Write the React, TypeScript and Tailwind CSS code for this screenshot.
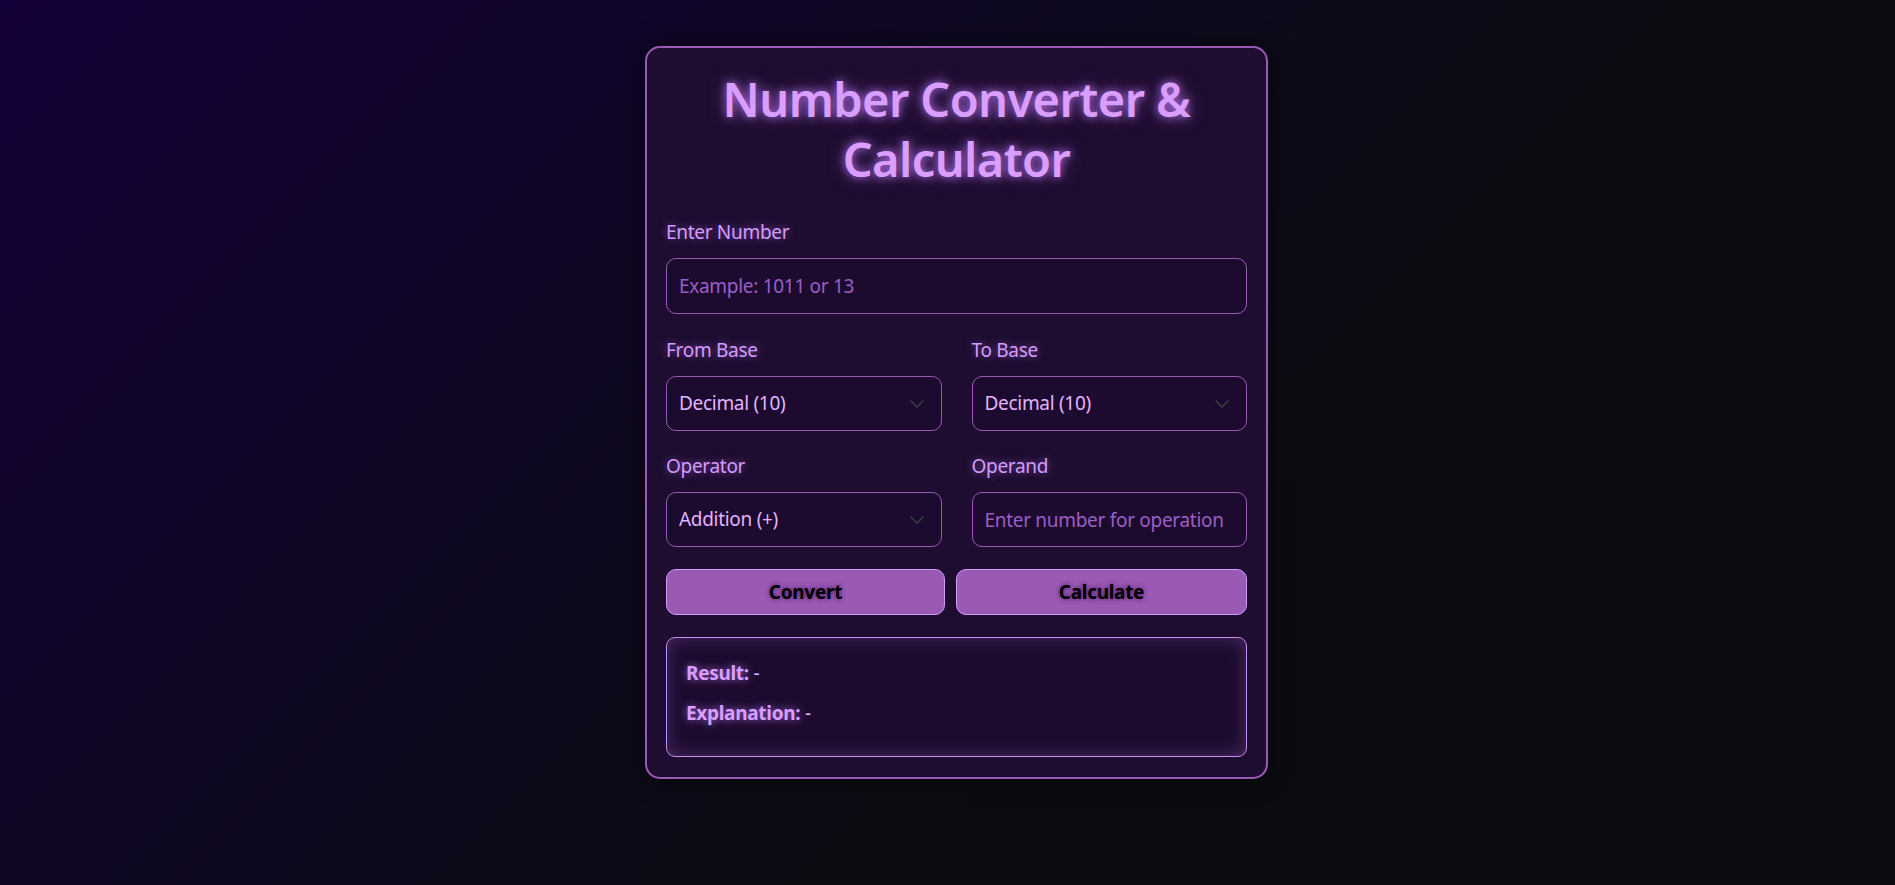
import React, { useState } from "react";

const font = { fontFamily: '"Noto Sans", "Open Sans", sans-serif' };

function Chevron() {
  return (
    <svg
      className="pointer-events-none absolute right-[18px] top-1/2 -translate-y-1/2"
      width="14"
      height="8"
      viewBox="0 0 14 8"
      fill="none"
    >
      <path d="M1 1l6 6 6-6" stroke="#3c4444" strokeWidth="1.3" strokeLinecap="round" strokeLinejoin="round" />
    </svg>
  );
}

function Label({ children }: { children: React.ReactNode }) {
  return (
    <label className="block text-[19px] tracking-[-0.3px] leading-[25px] mb-[13px] text-[#d49cff] [text-shadow:0_0_8px_rgba(199,125,255,0.55)]">
      {children}
    </label>
  );
}

const fieldBase =
  "w-full h-[55px] rounded-[10px] border border-[#9b59b6] bg-[#1d0b2f] pl-[12px] pr-[12px] text-[19px] tracking-[-0.3px] text-[#e2b4ff] outline-none";

function Select({ value, onChange, options }: { value: string; onChange: (v: string) => void; options: string[] }) {
  return (
    <div className="relative">
      <select
        value={value}
        onChange={(e) => onChange(e.target.value)}
        className={fieldBase + " appearance-none pr-[40px]"}
        style={font}
      >
        {options.map((o) => (
          <option key={o} value={o} className="bg-[#1d0b2f]">
            {o}
          </option>
        ))}
      </select>
      <Chevron />
    </div>
  );
}

const bases = ["Binary (2)", "Octal (8)", "Decimal (10)", "Hexadecimal (16)"];
const ops = ["Addition (+)", "Subtraction (-)", "Multiplication (×)", "Division (÷)"];

export default function App() {
  const [num, setNum] = useState("");
  const [from, setFrom] = useState("Decimal (10)");
  const [to, setTo] = useState("Decimal (10)");
  const [op, setOp] = useState("Addition (+)");
  const [operand, setOperand] = useState("");

  return (
    <div
      className="min-h-[885px] w-full flex justify-center pl-[18px] pt-[46px] bg-[linear-gradient(135deg,#140038_0%,#0e0a1c_45%,#0b0c10_65%,#0b0c10_100%)]"
      style={font}
    >
      <div className="w-[623px] self-start rounded-[15px] border-2 border-[#9b59b6] bg-[#1e0d30] px-[19px] pt-[21px] pb-[20px] shadow-[0_0_25px_rgba(0,0,0,0.6)]">
        <h1 className="text-center text-[47px] tracking-[-0.6px] leading-[60px] font-semibold text-[#d99eff] mb-[31px] [text-shadow:0_0_10px_rgba(199,125,255,0.9),0_0_20px_rgba(199,125,255,0.35)]">
          Number Converter &amp;
          <br />
          Calculator
        </h1>

        <div>
          <Label>Enter Number</Label>
          <input
            value={num}
            onChange={(e) => setNum(e.target.value)}
            placeholder="Example: 1011 or 13"
            className={fieldBase + " h-[56px] placeholder:text-[#9a5fc6]"}
            style={font}
          />
        </div>

        <div className="grid grid-cols-2 gap-x-[30px] mt-[24px]">
          <div>
            <Label>From Base</Label>
            <Select value={from} onChange={setFrom} options={bases} />
          </div>
          <div>
            <Label>To Base</Label>
            <Select value={to} onChange={setTo} options={bases} />
          </div>
        </div>

        <div className="grid grid-cols-2 gap-x-[30px] mt-[23px]">
          <div>
            <Label>Operator</Label>
            <Select value={op} onChange={setOp} options={ops} />
          </div>
          <div>
            <Label>Operand</Label>
            <input
              value={operand}
              onChange={(e) => setOperand(e.target.value)}
              placeholder="Enter number for operation"
              className={fieldBase + " pr-[6px] placeholder:text-[#9a5fc6]"}
              style={font}
            />
          </div>
        </div>

        <div className="flex gap-[11px] mt-[22px]">
          <button className="grow h-[46px] rounded-[10px] border border-[#d29bff] bg-[#9b59b6] text-[19px] tracking-[-0.3px] font-bold text-black [text-shadow:0_0_5px_rgba(60,16,83,0.9)]">
            Convert
          </button>
          <button className="grow h-[46px] rounded-[10px] border border-[#d29bff] bg-[#9b59b6] text-[19px] tracking-[-0.3px] font-bold text-black [text-shadow:0_0_5px_rgba(60,16,83,0.9)]">
            Calculate
          </button>
        </div>

        <div className="mt-[22px] rounded-[9px] border border-[#c98cf0] bg-[#1c0b2e] px-[19px] pt-[20px] pb-[28px] flex flex-col gap-[10px] shadow-[inset_0_0_18px_rgba(199,125,255,0.28)]">
          <p className="text-[19px] tracking-[-0.3px] leading-[30px] text-[#e2b4ff]">
            <span className="font-bold text-[#d99eff] [text-shadow:0_0_8px_rgba(199,125,255,0.8)]">Result:</span> -
          </p>
          <p className="text-[19px] tracking-[-0.3px] leading-[30px] text-[#e2b4ff]">
            <span className="font-bold text-[#d99eff] [text-shadow:0_0_8px_rgba(199,125,255,0.8)]">Explanation:</span> -
          </p>
        </div>
      </div>
    </div>
  );
}
